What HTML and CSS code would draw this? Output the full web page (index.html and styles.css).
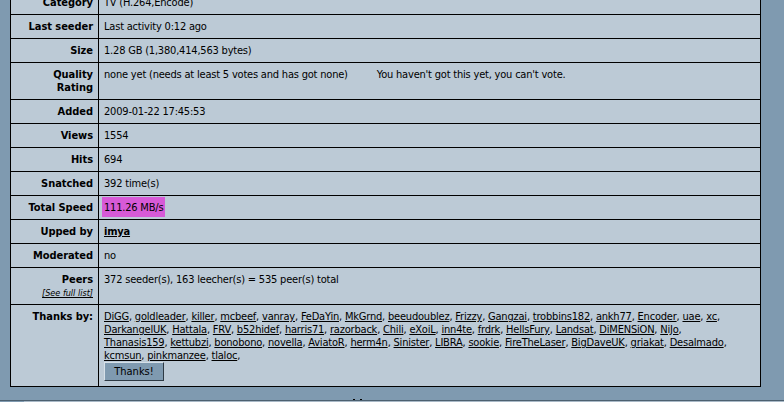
FILE: index.html
```html
<!DOCTYPE html>
<html>
<head>
<meta charset="utf-8">
<link rel="stylesheet" href="styles.css">
</head>
<body>
<div class="page">
  <table class="details">
    <colgroup><col class="col-label"><col></colgroup>
    <tr><td class="label">Category</td><td class="value">TV (H.264,Encode)</td></tr>
    <tr><td class="label">Last seeder</td><td class="value">Last activity 0:12 ago</td></tr>
    <tr><td class="label">Size</td><td class="value">1.28 GB (1,380,414,563 bytes)</td></tr>
    <tr><td class="label">Quality<br>Rating</td><td class="value">none yet (needs at least 5 votes and has got none)<span class="vote">You haven't got this yet, you can't vote.</span></td></tr>
    <tr><td class="label">Added</td><td class="value">2009-01-22 17:45:53</td></tr>
    <tr><td class="label">Views</td><td class="value">1554</td></tr>
    <tr><td class="label">Hits</td><td class="value">694</td></tr>
    <tr><td class="label">Snatched</td><td class="value">392 time(s)</td></tr>
    <tr><td class="label">Total Speed</td><td class="value"><span class="speed">111.26 MB/s</span></td></tr>
    <tr><td class="label">Upped by</td><td class="value"><a href="#" class="user">imya</a></td></tr>
    <tr><td class="label">Moderated</td><td class="value">no</td></tr>
    <tr><td class="label">Peers<br><a href="#" class="fulllist">[See full list]</a></td><td class="value">372 seeder(s), 163 leecher(s) = 535 peer(s) total</td></tr>
    <tr><td class="label">Thanks by:</td><td class="value thanks">
      <a href="#">DiGG</a>, <a href="#">goldleader</a>, <a href="#">killer</a>, <a href="#">mcbeef</a>, <a href="#">vanray</a>, <a href="#">FeDaYin</a>, <a href="#">MkGrnd</a>, <a href="#">beeudoublez</a>, <a href="#">Frizzy</a>, <a href="#">Gangzai</a>, <a href="#">trobbins182</a>, <a href="#">ankh77</a>, <a href="#">Encoder</a>, <a href="#">uae</a>, <a href="#">xc</a>,<br>
      <a href="#">DarkangelUK</a>, <a href="#">Hattala</a>, <a href="#">FRV</a>, <a href="#">b52hidef</a>, <a href="#">harris71</a>, <a href="#">razorback</a>, <a href="#">Chili</a>, <a href="#">eXoiL</a>, <a href="#">inn4te</a>, <a href="#">frdrk</a>, <a href="#">HellsFury</a>, <a href="#">Landsat</a>, <a href="#">DiMENSiON</a>, <a href="#">NiJo</a>,<br>
      <a href="#">Thanasis159</a>, <a href="#">kettubzi</a>, <a href="#">bonobono</a>, <a href="#">novella</a>, <a href="#">AviatoR</a>, <a href="#">herm4n</a>, <a href="#">Sinister</a>, <a href="#">LIBRA</a>, <a href="#">sookie</a>, <a href="#">FireTheLaser</a>, <a href="#">BigDaveUK</a>, <a href="#">griakat</a>, <a href="#">Desalmado</a>,<br>
      <a href="#">kcmsun</a>, <a href="#">pinkmanzee</a>, <a href="#">tlaloc</a>,
      <button class="thanks-btn" type="button">Thanks!</button>
    </td></tr>
  </table>
  <div class="footer">
    <span class="grip"></span>
    <span class="tab"></span>
  </div>
</div>
</body>
</html>
```

FILE: styles.css
```css
html, body {
  margin: 0;
  padding: 0;
  background: #7f9ab0;
  overflow: hidden;
}

.page {
  position: relative;
  padding: 0 0 0 10px;
  font-family: "DejaVu Sans Condensed", "DejaVu Sans", sans-serif;
  font-size: 11px;
  line-height: 13px;
  color: #000;
}

.details {
  margin-top: -10px;
  width: 751px;
  border-collapse: collapse;
  table-layout: fixed;
  background: #bccad6;
  border: 1px solid #000;
}

.col-label {
  width: 88px;
}

.details td {
  border: 1px solid #000;
  padding: 5px;
  vertical-align: top;
}

.label {
  text-align: right;
  font-weight: bold;
  letter-spacing: -0.05px;
}

.value {
  letter-spacing: -0.2px;
}

.vote {
  margin-left: 29px;
}

.speed {
  background: #d75ad7;
  padding: 4px 2px 3px 2px;
  margin-left: -2px;
}

a {
  color: #000;
  text-decoration: underline;
}

.user {
  font-weight: bold;
}

.fulllist {
  font-weight: normal;
  font-style: italic;
  font-size: 9px;
  line-height: 11px;
  letter-spacing: 0;
}

.thanks-btn {
  display: block;
  margin: 0;
  width: 60px;
  height: 19px;
  padding: 0;
  font-family: "DejaVu Sans Condensed", "DejaVu Sans", sans-serif;
  font-size: 11px;
  line-height: 13px;
  color: #000;
  background: #7f9ab0;
  border: 1px solid;
  border-color: #d6e0e8 #2e3a44 #2e3a44 #d6e0e8;
}

.footer {
  position: relative;
  margin: 13px 0 0 -10px;
  height: 12px;
  border-top: 1px solid #4c6070;
  background: #a9b9c7;
}

.tab {
  display: block;
  width: 24px;
  height: 12px;
  background: #7f9ab0;
}

.grip {
  position: absolute;
  left: 353px;
  top: -2px;
  width: 10px;
  height: 1px;
  background: linear-gradient(to right, #000 0 2px, transparent 2px 7px, #000 7px 9px, transparent 9px);
}
```
